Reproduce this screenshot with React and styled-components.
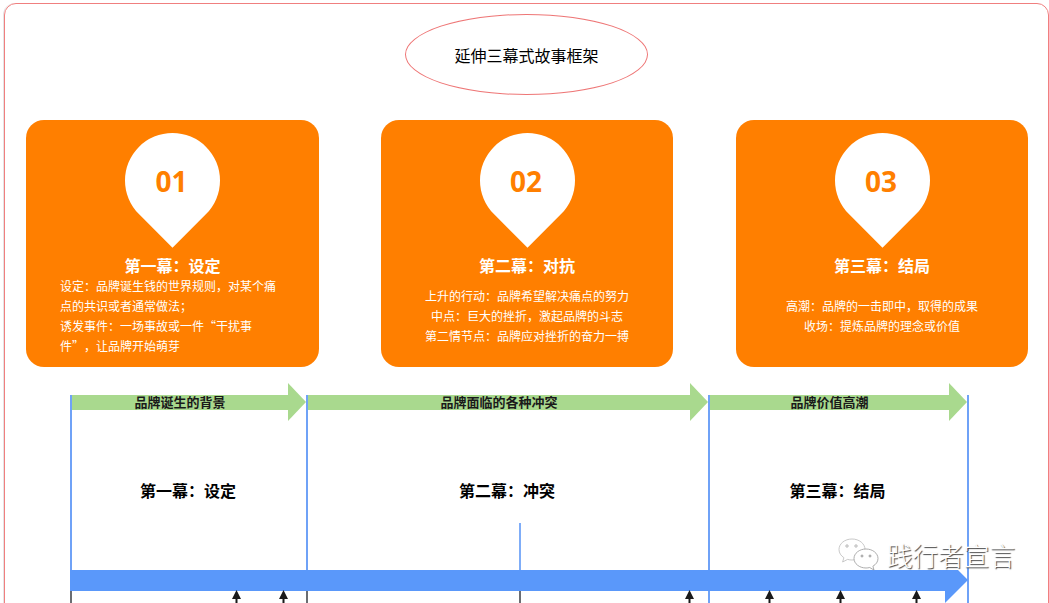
import React from "react";
import styled, { createGlobalStyle } from "styled-components";

const GlobalStyle = createGlobalStyle`
  html, body {
    margin: 0;
    height: 603px;
    overflow: hidden;
    background: #fff;
    font-family: "Noto Sans CJK SC", "Noto Sans", sans-serif;
    text-spacing-trim: space-all;
  }
`;

const Page = styled.div`
  position: relative;
  height: 603px;
  overflow: hidden;
`;

const Frame = styled.div`
  position: relative;
  box-sizing: border-box;
  width: 1045px;
  height: 640px;
  margin: 3px 0 0 4px;
  padding-top: 10px;
  border: 1px solid #f07f7f;
  border-radius: 12px;
  box-shadow: -1px 0 0 #e4e4e4;
`;

const TitleEllipse = styled.div`
  box-sizing: border-box;
  width: 243px;
  height: 81px;
  margin: 0 auto;
  display: flex;
  align-items: center;
  justify-content: center;
  border: 1px solid #ee7676;
  border-radius: 50%;
  font-size: 16px;
  color: #000;
`;

const Cards = styled.div`
  display: grid;
  grid-template-columns: 293px 292px 293px;
  column-gap: 62px;
  margin: 25px 0 0 21px;
`;

const Card = styled.div`
  height: 247px;
  box-sizing: border-box;
  padding-top: 13px;
  display: flex;
  flex-direction: column;
  align-items: center;
  background: #ff7f00;
  border-radius: 18px;
  color: #fff;

  &:last-child {
    margin-left: 1px;
  }
`;

const Pin = styled.div`
  position: relative;
  width: 95px;
  height: 114px;
  display: flex;
  justify-content: center;
  flex-shrink: 0;
  font-family: "Open Sans", sans-serif;
  font-weight: 700;
  font-size: 28px;
  line-height: 97px;
  color: #ff7f00;

  &::before {
    content: "";
    position: absolute;
    left: 0;
    top: 0;
    width: 95px;
    height: 95px;
    background: #fff;
    border-radius: 50% 50% 0 50%;
    transform: rotate(45deg);
  }
`;

const PinNumber = styled.span`
  position: relative;
  margin-right: 2px;
`;

const CardTitle = styled.div`
  margin-top: 6px;
  font-size: 16px;
  font-weight: 700;
  line-height: 24px;
`;

const CardBody = styled.div`
  flex: 1;
  margin-top: -12px;
  display: flex;
  flex-direction: column;
  justify-content: center;
  align-self: ${(p) => (p.$left ? "flex-start" : "center")};
  margin-left: ${(p) => (p.$left ? "34px" : "0")};
  font-size: 12px;
  line-height: 20px;
  text-align: ${(p) => (p.$left ? "left" : "center")};
  white-space: nowrap;
`;

const Timeline = styled.div`
  position: relative;
  display: grid;
  grid-template-columns: 236px 402px 259px;
  height: 236px;
  margin: 16px 0 0 65px;
  width: 899px;
`;

const Act = styled.div`
  position: relative;

  &::before {
    content: "";
    position: absolute;
    left: 0;
    top: 12px;
    bottom: 0;
    width: 2px;
    background: #6fa2f7;
  }
`;

const PhaseArrow = styled.div`
  display: flex;
  align-items: center;
  height: 38px;
`;

const PhaseLabel = styled.div`
  flex: 1;
  height: 15px;
  padding-left: 2px;
  background: #a9d98e;
  font-size: 13px;
  font-weight: 700;
  line-height: 14px;
  text-align: center;
  color: #1a1a1a;
`;

const PhaseHead = styled.div`
  width: 0;
  height: 0;
  border-left: 18px solid #a9d98e;
  border-top: 19px solid transparent;
  border-bottom: 19px solid transparent;
`;

const ActTitle = styled.div`
  margin-top: 57px;
  font-size: 16px;
  font-weight: 700;
  line-height: 24px;
  text-align: center;
  color: #000;
`;

const EndLine = styled.div`
  position: absolute;
  left: 897px;
  top: 12px;
  bottom: 0;
  width: 2px;
  background: #6fa2f7;
`;

const MidLine = styled.div`
  position: absolute;
  left: 449px;
  top: 140px;
  width: 2px;
  height: 47px;
  background: #7fadf8;
`;

const MainBar = styled.div`
  position: absolute;
  left: 0;
  top: 174px;
  width: 898px;
  height: 46px;
  background: #5a98fa;
  clip-path: polygon(0 13px, 888px 13px, 898px 23px, 875px 46px, 875px 34px, 0 34px);
`;

const Tick = styled.div`
  position: absolute;
  left: ${(p) => p.$x}px;
  top: 208px;
  width: 2px;
  height: 14px;
  background: #6a6d72;
`;

const Marker = styled.svg`
  position: absolute;
  left: ${(p) => p.$x - 5}px;
  top: 207px;
  width: 11px;
  height: 14px;
`;

const Watermark = styled.div`
  position: absolute;
  left: 838px;
  top: 537px;
  display: flex;
  align-items: center;
  gap: 8px;
  font-size: 25.6px;
  line-height: 36px;
  font-weight: 300;
  color: #fff;
  text-shadow: 1px 1px 1px #444;
  white-space: nowrap;
`;

const WechatIcon = styled.svg`
  width: 41px;
  height: 35px;
  flex-shrink: 0;
`;

const cards = [
  {
    num: "01",
    title: "第一幕：设定",
    left: true,
    lines: [
      "设定：品牌诞生钱的世界规则，对某个痛",
      "点的共识或者通常做法；",
      "诱发事件：一场事故或一件“干扰事",
      "件”，让品牌开始萌芽",
    ],
  },
  {
    num: "02",
    title: "第二幕：对抗",
    lines: [
      "上升的行动：品牌希望解决痛点的努力",
      "中点：巨大的挫折，激起品牌的斗志",
      "第二情节点：品牌应对挫折的奋力一搏",
    ],
  },
  {
    num: "03",
    title: "第三幕：结局",
    lines: ["高潮：品牌的一击即中，取得的成果", "收场：提炼品牌的理念或价值"],
  },
];

const acts = [
  { label: "品牌诞生的背景", title: "第一幕：设定" },
  { label: "品牌面临的各种冲突", title: "第二幕：冲突" },
  { label: "品牌价值高潮", title: "第三幕：结局" },
];

const ticks = [0, 236, 449];
const markers = [166, 213, 619, 699, 770, 846];

export default function App() {
  return (
    <Page>
      <GlobalStyle />
      <Frame>
        <TitleEllipse>延伸三幕式故事框架</TitleEllipse>
        <Cards>
          {cards.map((c) => (
            <Card key={c.num}>
              <Pin>
                <PinNumber>{c.num}</PinNumber>
              </Pin>
              <CardTitle>{c.title}</CardTitle>
              <CardBody $left={c.left}>
                {c.lines.map((l) => (
                  <div key={l}>{l}</div>
                ))}
              </CardBody>
            </Card>
          ))}
        </Cards>
        <Timeline>
          {acts.map((a) => (
            <Act key={a.label}>
              <PhaseArrow>
                <PhaseLabel>{a.label}</PhaseLabel>
                <PhaseHead />
              </PhaseArrow>
              <ActTitle>{a.title}</ActTitle>
            </Act>
          ))}
          <EndLine />
          <MidLine />
          <MainBar />
          {ticks.map((x) => (
            <Tick key={x} $x={x} />
          ))}
          {markers.map((x) => (
            <Marker key={x} $x={x} viewBox="0 0 11 14">
              <path d="M5.5 0 L10 9 H6.5 V14 H4.500 V9 H1 Z" fill="#1a1a1a" />
            </Marker>
          ))}
        </Timeline>
      </Frame>
      <Watermark>
        <WechatIcon viewBox="0 0 41 35">
          <path
            d="M14 1C6.800 1 1 5.600 1 11.500c0 3.400 1.900 6.200 4.900 8.200L4.600 24l5-2.600c1.400.4 2.800.6 4.400.6 7.200 0 13-4.700 13-10.500S21.200 1 14 1z"
            fill="#fff"
            stroke="#bbb"
            strokeWidth="0.8"
          />
          <path
            d="M28 11c-6.600 0-12 4.300-12 9.500S21.400 30 28 30c1.300 0 2.600-.2 3.700-.5l4.300 2.500-1.100-3.800c3.100-1.700 5.100-4.500 5.100-7.700C40 15.300 34.600 11 28 11z"
            fill="#fff"
            stroke="#999"
            strokeWidth="0.8"
          />
          <circle cx="9" cy="8" r="1.200" fill="none" stroke="#999" strokeWidth="0.7" />
          <circle cx="18" cy="8" r="1.200" fill="none" stroke="#999" strokeWidth="0.7" />
          <circle cx="24" cy="18" r="1" fill="none" stroke="#777" strokeWidth="0.7" />
          <circle cx="32" cy="18" r="1" fill="none" stroke="#777" strokeWidth="0.7" />
        </WechatIcon>
        践行者宣言
      </Watermark>
    </Page>
  );
}
